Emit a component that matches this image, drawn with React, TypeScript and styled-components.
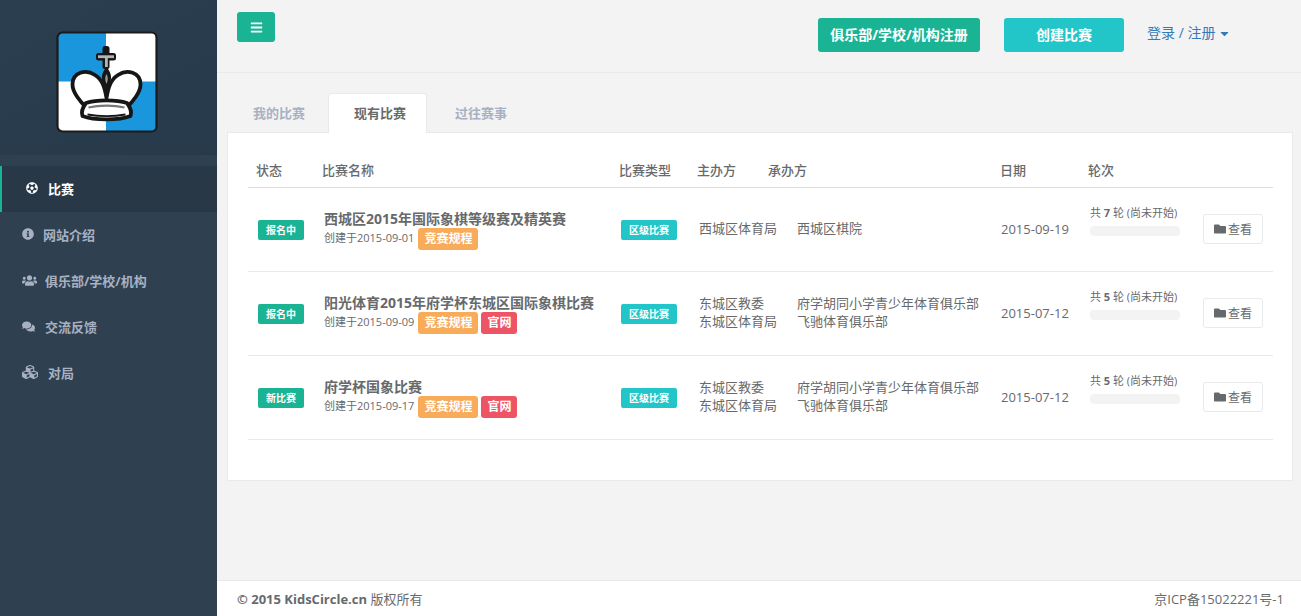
import React from "react";
import styled, { createGlobalStyle } from "styled-components";
import {
  FaBars,
  FaCaretDown,
  FaComments,
  FaCubes,
  FaFolder,
  FaFutbol,
  FaInfoCircle,
  FaUsers,
} from "react-icons/fa";

const GlobalStyle = createGlobalStyle`
  html, body {
    margin: 0;
    padding: 0;
    height: 100%;
  }
  body {
    background: #f3f3f4;
    color: #676a6c;
    font-family: "Open Sans", "Noto Sans CJK SC", sans-serif;
    font-size: 13px;
  }
  * {
    box-sizing: border-box;
  }
`;

const navItems = [
  { label: "比赛", icon: <FaFutbol size={12} />, gap: 10, active: true },
  { label: "网站介绍", icon: <FaInfoCircle size={12} />, gap: 9 },
  { label: "俱乐部/学校/机构", icon: <FaUsers size={15} />, gap: 8 },
  { label: "交流反馈", icon: <FaComments size={13} />, gap: 10 },
  { label: "对局", icon: <FaCubes size={16} />, gap: 10 },
];

const contests = [
  {
    status: "报名中",
    title: "西城区2015年国际象棋等级赛及精英赛",
    created: "2015-09-01",
    site: false,
    hosts: ["西城区体育局"],
    organizers: ["西城区棋院"],
    date: "2015-09-19",
    rounds: 7,
  },
  {
    status: "报名中",
    title: "阳光体育2015年府学杯东城区国际象棋比赛",
    created: "2015-09-09",
    site: true,
    hosts: ["东城区教委", "东城区体育局"],
    organizers: ["府学胡同小学青少年体育俱乐部", "飞驰体育俱乐部"],
    date: "2015-07-12",
    rounds: 5,
  },
  {
    status: "新比赛",
    title: "府学杯国象比赛",
    created: "2015-09-17",
    site: true,
    hosts: ["东城区教委", "东城区体育局"],
    organizers: ["府学胡同小学青少年体育俱乐部", "飞驰体育俱乐部"],
    date: "2015-07-12",
    rounds: 5,
  },
];

const KingLogo = () => (
  <svg width="102" height="102" viewBox="-1 -1 102 102">
    <rect x="0.5" y="0.5" width="99" height="99" rx="5" fill="#fff" />
    <path d="M49 1H5a4 4 0 0 0-4 4v44.500h48z" fill="#1a96dc" />
    <path d="M49 49.500V99h46a4 4 0 0 0 4-4V49.500z" fill="#1a96dc" />
    <rect x="0.500" y="0.500" width="99" height="99" rx="5" fill="none" stroke="#1b1b1b" strokeWidth="2.200" />
    <path
      d="M49.500 66C48 57 46 48 38 43C29 37 15.500 40 15.500 52.500C15.500 60 23 70 30 76L69 76C76 70 83.500 60 83.500 52.500C83.500 40 70 37 61 43C53 48 51 57 49.500 66Z"
      fill="#fff"
      stroke="#161616"
      strokeWidth="3.800"
      strokeLinejoin="round"
    />
    <path d="M49.500 35C45 40 43.500 46 46.500 51.500L49.500 67L52.500 51.500C55.500 46 54 40 49.500 35Z" fill="#161616" />
    <path d="M49.500 42C47.800 45 47.800 48 49.500 52C51.200 48 51.200 45 49.500 42Z" fill="#9a9a9a" />
    <rect x="45.500" y="14" width="7" height="23" rx="2.500" fill="#161616" />
    <rect x="39" y="21" width="20" height="7.500" rx="2.500" fill="#161616" />
    <rect x="41" y="23.300" width="16" height="2.800" fill="#b5b5b5" />
    <rect x="48" y="26" width="2.800" height="9" fill="#b5b5b5" />
    <path
      d="M29 71C39 67.500 60 67.500 70 71C73 75 75 80 73.500 84C62 88.500 37 88.500 25.500 84C24 80 26 75 29 71Z"
      fill="#fff"
      stroke="#161616"
      strokeWidth="3.800"
      strokeLinejoin="round"
    />
    <path d="M31.500 75.500C42 73 57 73 67.500 75.500" fill="none" stroke="#777" strokeWidth="2.200" />
    <path d="M30.500 82.500C42 84.500 57 84.500 68.500 82.500" fill="none" stroke="#161616" strokeWidth="1.800" />
  </svg>
);

const App = () => {
  return (
    <Layout>
      <GlobalStyle />
      <Sidebar>
        <LogoBlock>
          <KingLogo />
        </LogoBlock>
        <Nav>
          {navItems.map((item) => (
            <NavItem key={item.label} $active={item.active} $gap={item.gap}>
              {item.icon}
              <span>{item.label}</span>
            </NavItem>
          ))}
        </Nav>
      </Sidebar>
      <Main>
        <TopBar>
          <MenuButton>
            <FaBars />
          </MenuButton>
          <TopActions>
            <ActionButton $color="#1ab394" $width={162}>
              俱乐部/学校/机构注册
            </ActionButton>
            <ActionButton $color="#23c6c8" $width={120}>
              创建比赛
            </ActionButton>
            <LoginLink>
              登录 / 注册 <FaCaretDown />
            </LoginLink>
          </TopActions>
        </TopBar>
        <Content>
          <Tabs>
            <Tab>我的比赛</Tab>
            <Tab $active>现有比赛</Tab>
            <Tab>过往赛事</Tab>
          </Tabs>
          <Card>
            <HeadRow>
              <span>状态</span>
              <span>比赛名称</span>
              <span>比赛类型</span>
              <span>主办方</span>
              <span>承办方</span>
              <span>日期</span>
              <span>轮次</span>
            </HeadRow>
            {contests.map((c) => (
              <Row key={c.title}>
                <div>
                  <Badge $color="#1ab394">{c.status}</Badge>
                </div>
                <NameCell>
                  <Title>{c.title}</Title>
                  <Meta>
                    <small>创建于{c.created}</small>
                    <Label $color="#f8ac59">竞赛规程</Label>
                    {c.site && <Label $color="#ed5565">官网</Label>}
                  </Meta>
                </NameCell>
                <div>
                  <Badge $color="#23c6c8">区级比赛</Badge>
                </div>
                <Lines>
                  {c.hosts.map((h) => (
                    <div key={h}>{h}</div>
                  ))}
                </Lines>
                <Lines>
                  {c.organizers.map((o) => (
                    <div key={o}>{o}</div>
                  ))}
                </Lines>
                <DateCell>{c.date}</DateCell>
                <RoundCell>
                  <RoundText>
                    共 <b>{c.rounds}</b> 轮 (尚未开始)
                  </RoundText>
                  <Progress />
                </RoundCell>
                <ViewButton>
                  <FaFolder />
                  查看
                </ViewButton>
              </Row>
            ))}
          </Card>
        </Content>
        <Footer>
          <span>
            <b>© 2015 KidsCircle.cn</b> 版权所有
          </span>
          <span>京ICP备15022221号-1</span>
        </Footer>
      </Main>
    </Layout>
  );
};

const Layout = styled.div`
  display: flex;
  min-height: 100vh;
`;

const Sidebar = styled.aside`
  width: 217px;
  flex-shrink: 0;
  background: #2f4050;
`;

const LogoBlock = styled.div`
  height: 155px;
  padding-top: 31px;
  display: flex;
  justify-content: center;
  background: linear-gradient(150deg, #2b3e50 0%, #293c4d 55%, #273a4b 100%);
  svg {
    display: block;
    margin-left: -3px;
  }
`;

const Nav = styled.nav`
  margin-top: 11px;
`;

const NavItem = styled.div<{ $active?: boolean; $gap: number }>`
  height: 46px;
  display: flex;
  align-items: center;
  gap: ${(p) => p.$gap}px;
  padding-left: ${(p) => (p.$active ? "24px" : "22px")};
  padding-bottom: 2px;
  font-weight: 700;
  color: ${(p) => (p.$active ? "#fff" : "#a7b1c2")};
  background: ${(p) => (p.$active ? "#293846" : "transparent")};
  border-left: ${(p) => (p.$active ? "2px solid #1ab394" : "none")};
`;

const Main = styled.div`
  flex: 1;
  min-width: 0;
  display: flex;
  flex-direction: column;
`;

const TopBar = styled.header`
  height: 73px;
  flex-shrink: 0;
  border-bottom: 1px solid #e7eaec;
  display: flex;
  justify-content: space-between;
  padding: 12px 0 0 20px;
`;

const MenuButton = styled.button`
  width: 38px;
  height: 30px;
  padding: 0;
  border: none;
  border-radius: 3px;
  background: #1ab394;
  color: #fff;
  font-size: 13px;
  display: flex;
  align-items: center;
  justify-content: center;
`;

const TopActions = styled.div`
  display: flex;
  align-items: flex-start;
  padding-top: 6px;
`;

const ActionButton = styled.button<{ $color: string; $width: number }>`
  width: ${(p) => p.$width}px;
  height: 34px;
  margin-right: 24px;
  padding: 0 0 2px;
  border: none;
  border-radius: 3px;
  background: ${(p) => p.$color};
  color: #fff;
  font-family: inherit;
  font-size: 14px;
  font-weight: 700;
`;

const LoginLink = styled.a`
  width: 154px;
  margin-left: -1px;
  line-height: 30px;
  color: #337ab7;
  font-size: 14px;
  svg {
    font-size: 13px;
    margin-left: -1px;
    vertical-align: -2px;
  }
`;

const Content = styled.main`
  flex: 1;
  padding: 20px 8px 0 10px;
`;

const Tabs = styled.div`
  display: flex;
  gap: 2px;
  position: relative;
  z-index: 1;
  margin-bottom: -1px;
`;

const Tab = styled.div<{ $active?: boolean }>`
  height: 40px;
  padding: 0 20px 2px 25px;
  display: flex;
  align-items: center;
  font-weight: 700;
  border-radius: 4px 4px 0 0;
  border: 1px solid ${(p) => (p.$active ? "#e7eaec" : "transparent")};
  border-bottom: none;
  background: ${(p) => (p.$active ? "#fff" : "transparent")};
  color: ${(p) => (p.$active ? "#676a6c" : "#a7b1c2")};
`;

const Card = styled.section`
  height: 349px;
  padding: 20px 19px 0 20px;
  background: #fff;
  border: 1px solid #e7eaec;
`;

const HeadRow = styled.div`
  height: 35px;
  display: grid;
  grid-template-columns: 66px 297px 78px 71px 232px 88px 1fr;
  align-items: center;
  padding: 0 0 2px 8px;
  border-bottom: 1px solid #dddddd;
  font-weight: 500;
`;

const Row = styled.div`
  height: 84px;
  display: grid;
  grid-template-columns: 66px 297px 78px 98px 204px 89px 113px 60px;
  align-items: center;
  padding: 0 0 0 10px;
  border-bottom: 1px solid #e7eaec;
  line-height: 18px;
`;

const Badge = styled.span<{ $color: string }>`
  display: inline-block;
  height: 20px;
  line-height: 20px;
  padding: 0 8px;
  border-radius: 2px;
  background: ${(p) => p.$color};
  color: #fff;
  font-size: 10px;
  font-weight: 700;
`;

const NameCell = styled.div`
  display: flex;
  flex-direction: column;
`;

const Title = styled.div`
  font-size: 14px;
  font-weight: 700;
  line-height: 20px;
  margin-bottom: -1px;
`;

const Meta = styled.div`
  display: flex;
  align-items: center;
  gap: 4px;
  small {
    font-size: 11px;
    padding-bottom: 2px;
  }
`;

const Label = styled.span<{ $color: string }>`
  height: 22px;
  line-height: 21px;
  padding: 0 6px;
  border-radius: 3px;
  background: ${(p) => p.$color};
  color: #fff;
  font-size: 12px;
  font-weight: 700;
  & + & {
    margin-left: -1px;
  }
`;

const Lines = styled.div`
  padding-bottom: 3px;
`;

const DateCell = styled.div`
  padding-bottom: 2px;
`;

const RoundCell = styled.div`
  display: flex;
  flex-direction: column;
  gap: 6px;
  padding-bottom: 17px;
`;

const RoundText = styled.div`
  font-size: 11px;
  line-height: 14px;
`;

const Progress = styled.div`
  width: 90px;
  height: 10px;
  border-radius: 4px;
  background: #f3f3f4;
`;

const ViewButton = styled.button`
  width: 60px;
  height: 30px;
  margin-bottom: 2px;
  padding: 0;
  border: 1px solid #e7eaec;
  border-radius: 3px;
  background: #fff;
  color: #676a6c;
  font-family: inherit;
  font-size: 12px;
  display: flex;
  align-items: center;
  justify-content: center;
  gap: 2px;
  svg {
    font-size: 12px;
  }
`;

const Footer = styled.footer`
  height: 36px;
  flex-shrink: 0;
  display: flex;
  align-items: center;
  justify-content: space-between;
  padding: 0 17px 0 20px;
  background: #fff;
  border-top: 1px solid #e7eaec;
`;

export default App;
